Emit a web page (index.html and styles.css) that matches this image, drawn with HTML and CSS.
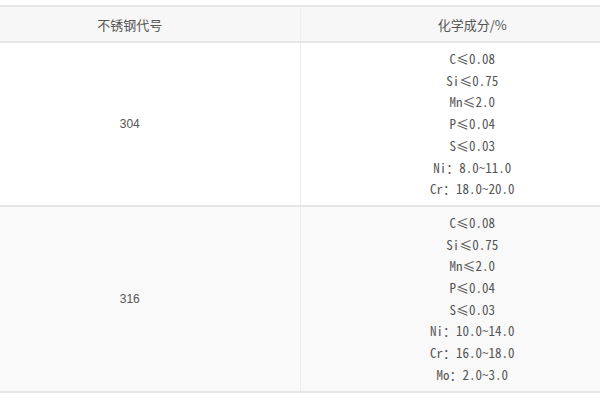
FILE: index.html
```html
<!DOCTYPE html>
<html lang="zh">
<head>
<meta charset="utf-8">
<link rel="stylesheet" href="styles.css">
</head>
<body>
<table class="spec">
  <thead>
    <tr><th class="c1">不锈钢代号</th><th class="c2">化学成分/%</th></tr>
  </thead>
  <tbody>
    <tr>
      <td class="c1 code">304</td>
      <td class="c2 comp">
        <p>C≤0.08</p>
        <p>Si≤0.75</p>
        <p>Mn≤2.0</p>
        <p>P≤0.04</p>
        <p>S≤0.03</p>
        <p>Ni：8.0~11.0</p>
        <p>Cr：18.0~20.0</p>
      </td>
    </tr>
    <tr class="alt">
      <td class="c1 code">316</td>
      <td class="c2 comp">
        <p>C≤0.08</p>
        <p>Si≤0.75</p>
        <p>Mn≤2.0</p>
        <p>P≤0.04</p>
        <p>S≤0.03</p>
        <p>Ni：10.0~14.0</p>
        <p>Cr：16.0~18.0</p>
        <p>Mo：2.0~3.0</p>
      </td>
    </tr>
  </tbody>
</table>
</body>
</html>
```
FILE: styles.css
```css
html, body {
  margin: 0;
  padding: 0;
  background: #fff;
}
body {
  padding-top: 5px;
  font-family: "Noto Sans CJK SC", "Liberation Sans", sans-serif;
  color: #555;
}
.spec {
  width: 600px;
  border-collapse: collapse;
  table-layout: fixed;
}
.spec th, .spec td {
  width: 50%;
  text-align: center;
  vertical-align: middle;
  border-top: 2px solid #e6e6e6;
  border-bottom: 2px solid #e6e6e6;
  border-left: 1px solid #eee;
  border-right: 1px solid #eee;
  box-sizing: border-box;
}
.spec .c1 {
  border-left: none;
  padding-left: 0;
  padding-right: 40px;
}
.spec .c2 {
  border-right: none;
  padding-left: 44px;
  padding-right: 0;
}
.spec th {
  background: #f7f7f7;
  font-weight: normal;
  font-size: 13px;
  height: 36px;
  padding-top: 0;
  padding-bottom: 0;
}
.spec td.code {
  font-family: "Liberation Sans", sans-serif;
  font-size: 12px;
}
.spec td.comp {
  padding-top: 5px;
  padding-bottom: 5px;
  font-family: "Noto Sans Mono CJK SC", "Liberation Mono", monospace;
  font-size: 13px;
}
.comp p {
  margin: 0;
  line-height: 21.7px;
}
.alt td {
  background: #f9f9f9;
}
```
